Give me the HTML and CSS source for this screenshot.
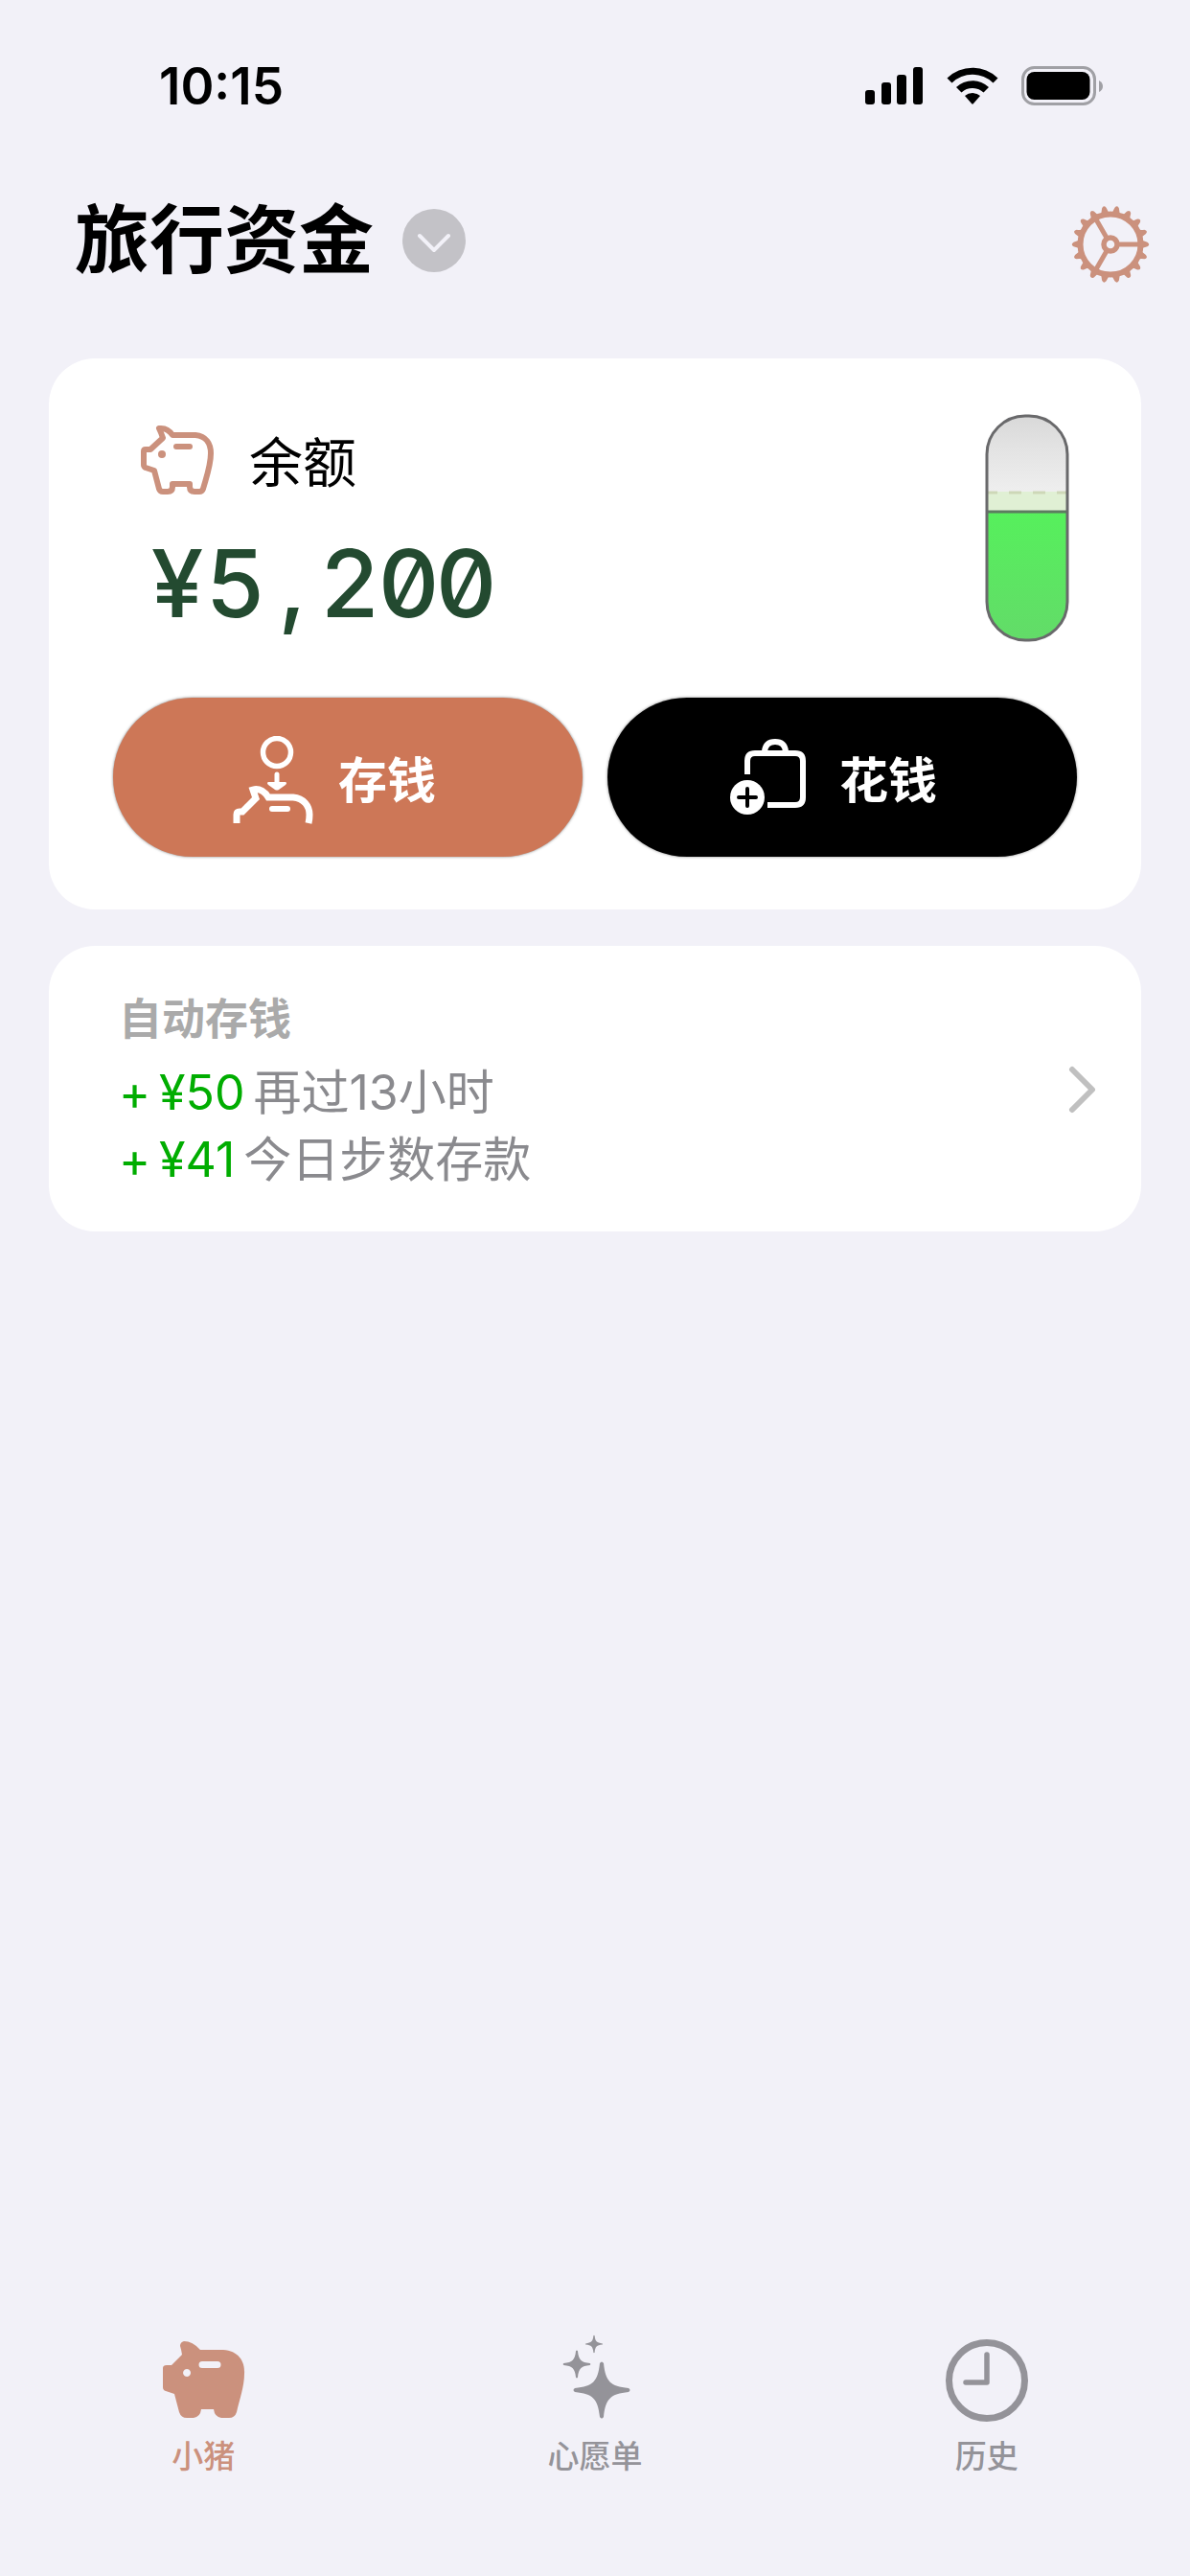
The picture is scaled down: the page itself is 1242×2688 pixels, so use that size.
FILE: index.html
```html
<!DOCTYPE html>
<html lang="zh-CN">
<head>
<meta charset="utf-8">
<meta name="viewport" content="width=device-width, initial-scale=1">
<title>旅行资金</title>
<link rel="stylesheet" href="styles.css">
</head>
<body>
<div class="status-bar">
  <time class="clock">10:15</time>
  <div class="status-icons">
    <svg width="62" height="42" viewBox="0 0 62 42" aria-hidden="true">
      <rect x="1" y="25" width="10" height="15" rx="3"/>
      <rect x="18" y="17" width="10" height="23" rx="3"/>
      <rect x="34" y="9" width="10" height="31" rx="3"/>
      <rect x="51" y="1" width="10" height="39" rx="3"/>
    </svg>
    <svg width="54" height="42" viewBox="0 0 54 42" aria-hidden="true">
      <path d="M0.500 12.500 A38 38 0 0 1 53.500 12.500 L48.500 17.500 A31 31 0 0 0 5.500 17.500 Z"/>
      <path d="M10 22 A24.500 24.500 0 0 1 44 22 L38.500 27.500 A17 17 0 0 0 15.500 27.500 Z"/>
      <path d="M19 31 A12.500 12.500 0 0 1 35 31 L27.800 39.300 Q27 40 26.200 39.300 Z"/>
    </svg>
    <svg width="86" height="42" viewBox="0 0 86 42" aria-hidden="true">
      <rect x="1.500" y="1.500" width="75" height="38" rx="12" fill="none" stroke="#a0a0a5" stroke-width="3"/>
      <rect x="5.500" y="6" width="66" height="29" rx="8"/>
      <path d="M81 15 Q85 17 85 21 Q85 25 81 27 Z" fill="#a0a0a5"/>
    </svg>
  </div>
</div>

<header class="header">
  <h1 class="title">旅行资金</h1>
  <button class="icon-button" type="button" aria-label="切换存钱罐">
    <svg width="66" height="66" viewBox="0 0 66 66">
      <circle cx="33" cy="33" r="33" fill="#c3c2c7"/>
      <path d="M18 28 L33 43 L48 28" fill="none" stroke="#f2f1f8" stroke-width="4" stroke-linecap="round" stroke-linejoin="round"/>
    </svg>
  </button>
  <button class="icon-button settings" type="button" aria-label="设置">
    <svg width="82" height="82" viewBox="-41 -41 82 82" fill="none" stroke="#cb917d">
      <defs><path id="tooth" d="M31 -6 Q34 -3 38.500 -2.300 Q42 0 38.500 2.300 Q34 3 31 6 Z" fill="#cb917d" stroke="none"/></defs>
      <circle r="31.500" stroke-width="6"/>
      <circle r="7" stroke-width="5.500"/>
      <path d="M9 0H30M-4.500 -7.800L-15 -26M-4.500 7.800L-15 26" stroke-width="5"/>
      <use href="#tooth"/><use href="#tooth" transform="rotate(20)"/><use href="#tooth" transform="rotate(40)"/>
      <use href="#tooth" transform="rotate(60)"/><use href="#tooth" transform="rotate(80)"/><use href="#tooth" transform="rotate(100)"/>
      <use href="#tooth" transform="rotate(120)"/><use href="#tooth" transform="rotate(140)"/><use href="#tooth" transform="rotate(160)"/>
      <use href="#tooth" transform="rotate(180)"/><use href="#tooth" transform="rotate(200)"/><use href="#tooth" transform="rotate(220)"/>
      <use href="#tooth" transform="rotate(240)"/><use href="#tooth" transform="rotate(260)"/><use href="#tooth" transform="rotate(280)"/>
      <use href="#tooth" transform="rotate(300)"/><use href="#tooth" transform="rotate(320)"/><use href="#tooth" transform="rotate(340)"/>
    </svg>
  </button>
</header>

<main class="content">
  <section class="card balance">
    <div class="summary">
      <div>
        <div class="balance-label">
          <svg width="78" height="74" viewBox="0 0 78 74" fill="none" stroke="#cb917d" stroke-width="6" stroke-linejoin="round" aria-hidden="true">
            <path d="M34 11 H58 C69 12 74 20 74 30 C74 43 69 56 66 67 Q65 70 62 70 H57 Q52 70 52 65 V62 H34 V65 Q34 70 29 70 H24 Q21 70 20 67 L15 48 L6 45 Q4 44 4 42 V28 Q4 26 6 26 H11 L24 14 Q22 8 20 4 Q29 3 34 11 Z"/>
            <path d="M38 23 H52" stroke-linecap="round"/>
            <circle cx="23" cy="31" r="4" fill="#cb917d" stroke="none"/>
          </svg>
          <h2 class="label-text">余额</h2>
        </div>
        <p class="amount"><span>¥</span><span>5</span><span>,</span><span>2</span><span>0</span><span>0</span></p>
      </div>
      <svg class="tube" width="88" height="238" viewBox="0 0 88 238" role="img" aria-label="目标进度">
        <defs>
          <linearGradient id="empty" x1="0" y1="0" x2="0" y2="1"><stop offset="0" stop-color="#d8d8d8"/><stop offset="0.150" stop-color="#e3e3e3"/><stop offset="0.350" stop-color="#efefef"/></linearGradient>
          <linearGradient id="fill" x1="0" y1="0" x2="0" y2="1"><stop offset="0" stop-color="#56f05c"/><stop offset="1" stop-color="#63db69"/></linearGradient>
          <clipPath id="shell"><rect x="2" y="2" width="84" height="234" rx="40"/></clipPath>
        </defs>
        <g clip-path="url(#shell)">
          <rect width="88" height="238" fill="url(#empty)"/>
          <rect y="81" width="88" height="22" fill="#e0f0d4"/>
          <path d="M0 82 H88" stroke="#cdd8b7" stroke-width="3" stroke-dasharray="13 12"/>
          <rect y="102" width="88" height="136" fill="url(#fill)"/>
          <path d="M0 102 H88" stroke="#5d7c60" stroke-width="3"/>
        </g>
        <rect x="2" y="2" width="84" height="234" rx="40" fill="none" stroke="#69696b" stroke-width="3"/>
      </svg>
    </div>
    <div class="actions">
      <button class="action save" type="button">
        <svg width="84" height="92" viewBox="0 0 84 92" fill="none" stroke="#fff" stroke-width="7" aria-hidden="true">
          <circle cx="46" cy="17" r="14.500" stroke-width="5.500"/>
          <path d="M46 40 V49" stroke-width="5" stroke-linecap="round"/>
          <path d="M37 48 H55 Q57 49 55 51 L48 56 Q46 57 44 56 L37 51 Q35 49 37 48 Z" fill="#fff" stroke="none"/>
          <path d="M4 91 V82 Q4 79 7 79 H10 L24 65 Q22 59 21 56 C28 54 34 59 37 64 H63 C74 65 80 73 80 82 Q80 87 79 91" stroke-linejoin="miter"/>
          <path d="M41 76 H57" stroke-width="6" stroke-linecap="round"/>
        </svg>
        <span>存钱</span>
      </button>
      <button class="action spend" type="button">
        <svg width="80" height="80" viewBox="0 0 80 80" fill="none" stroke="#fff" stroke-width="6" aria-hidden="true">
          <path d="M18 37 V23 Q18 15 26 15 H68 Q76 15 76 23 V61 Q76 69 68 69 H39"/>
          <path d="M36 15 V13 Q37 3 47 3 Q57 3 58 13 V15"/>
          <circle cx="18" cy="61" r="18" fill="#fff" stroke="none"/>
          <path d="M9 61 H27 M18 52 V70" stroke="#000" stroke-width="4" stroke-linecap="round"/>
        </svg>
        <span>花钱</span>
      </button>
    </div>
  </section>

  <a class="card auto" href="#auto">
    <div>
      <h2 class="auto-title">自动存钱</h2>
      <p class="auto-row"><span class="plus">+</span><span class="plus">¥50</span><span>再过13小时</span></p>
      <p class="auto-row"><span class="plus">+</span><span class="plus">¥41</span><span>今日步数存款</span></p>
    </div>
    <svg width="30" height="52" viewBox="0 0 30 52" aria-hidden="true">
      <path d="M4 5 L25 26 L4 47" fill="none" stroke="#c0c0c0" stroke-width="6" stroke-linecap="round" stroke-linejoin="round"/>
    </svg>
  </a>
</main>

<nav class="tabs">
  <a class="tab active" href="#piggy" aria-current="page">
    <svg width="88" height="90" viewBox="0 0 88 90" fill="currentColor" aria-hidden="true">
      <path fill-rule="evenodd" d="M41 13 H65 C80 14 88 24 87 38 C87 51 82 65 79 78 Q77 84 71 84 H63 Q56 83 55 75 H42 Q41 83 34 84 H27 Q21 84 19 78 L14 59 L5 56 Q2 55 2 52 V32 Q2 29 6 29 H11 L22 18 Q21 12 20 9 Q20 5 24 4 Q33 4 41 13 Z M43 25 a3.500 3.500 0 0 0 0 7 H59 a3.500 3.500 0 0 0 0 -7 Z M27 33 a4 4 0 1 0 0.100 0 Z"/>
    </svg>
    <span>小猪</span>
  </a>
  <a class="tab" href="#wishes">
    <svg class="stars" width="88" height="90" viewBox="0 0 88 90" fill="currentColor" aria-hidden="true">
      <defs><path id="star" d="M-2 -28 Q0 -31 2 -28 C4 -9 9 -4 28 -2 Q31 0 28 2 C9 4 4 9 2 28 Q0 31 -2 28 C-4 9 -9 4 -28 2 Q-31 0 -28 -2 C-9 -4 -4 -9 -2 -28 Z"/></defs>
      <use href="#star" transform="translate(51 55)"/>
      <use href="#star" transform="translate(25 28) scale(0.490)"/>
      <use href="#star" transform="translate(43 7) scale(0.310)"/>
    </svg>
    <span>心愿单</span>
  </a>
  <a class="tab" href="#history">
    <svg width="88" height="90" viewBox="0 0 88 90" fill="none" stroke="currentColor" aria-hidden="true">
      <circle cx="44" cy="45" r="39.500" stroke-width="7"/>
      <path d="M44 18 V47 H22" stroke-width="5.500" stroke-linecap="round" stroke-linejoin="round"/>
    </svg>
    <span>历史</span>
  </a>
</nav>
</body>
</html>
```
FILE: styles.css
```css
* { box-sizing: border-box; }

body {
  margin: 0;
  min-height: 100vh;
  display: flex;
  flex-direction: column;
  background: #f2f1f8;
  color: #000;
  font-family: Inter, "Noto Sans CJK SC", sans-serif;
}

h1, h2, p { margin: 0; }

button {
  border: 0;
  padding: 0;
  background: none;
  font: inherit;
  cursor: pointer;
}

a { color: inherit; text-decoration: none; }

svg { display: block; flex: none; }

.stars { overflow: visible; }

.status-bar {
  display: flex;
  justify-content: space-between;
  align-items: center;
  padding: 60px 90px 0 166px;
}

.clock { font-size: 53px; line-height: 60px; font-weight: 600; }

.status-icons { display: flex; gap: 24px; }

.header {
  display: flex;
  align-items: center;
  height: 134px;
  margin: 64px 42px 0 78px;
}

.title { font-size: 78px; line-height: 100px; font-weight: 700; }

.icon-button { margin-left: 30px; }

.settings { margin-top: 8px; margin-left: auto; }

.content {
  display: flex;
  flex-direction: column;
  gap: 38px;
  padding: 56px 51px 0;
}

.card { border-radius: 48px; background: #fff; }

.balance { padding: 58px 67px 55px; }

.summary { display: flex; justify-content: space-between; padding: 0 8px 0 28px; }

.balance-label { display: flex; align-items: flex-start; gap: 36px; padding-top: 11px; }

.label-text { font-size: 56px; line-height: 80px; font-weight: 400; }

.amount {
  display: grid;
  grid-template-columns: repeat(6, 60px);
  margin-top: 26px;
  padding-left: 9px;
  color: #234a30;
  font-size: 98px;
  line-height: 120px;
  font-weight: 500;
  text-align: center;
  font-feature-settings: "zero";
}

.actions { display: grid; grid-template-columns: 1fr 1fr; gap: 26px; margin-top: 58px; }

.action {
  display: flex;
  align-items: center;
  justify-content: center;
  gap: 26px;
  height: 166px;
  border-radius: 83px;
  color: #fff;
  font-size: 51px;
  font-weight: 700;
  box-shadow: 0 0 3px #00000080;
}

.save { padding-right: 28px; background: #cd7757; }

.save svg { margin-top: 6px; }

.spend { gap: 34px; padding-right: 18px; background: #000; }

.auto {
  display: flex;
  align-items: center;
  justify-content: space-between;
  padding: 41px 46px 40px 73px;
}

.auto-title { margin-bottom: 5px; color: #aaa; font-size: 45px; line-height: 72px; font-weight: 700; }

.auto-row { display: flex; gap: 9px; color: #8a8a8e; font-size: 50px; line-height: 70px; }

.plus { color: #00ad00; }

.tabs {
  display: grid;
  grid-template-columns: repeat(3, 1fr);
  margin-top: auto;
  padding: 0 8px 101px;
}

.tab {
  display: flex;
  flex-direction: column;
  align-items: center;
  gap: 10px;
  color: #949399;
  font-size: 33px;
  line-height: 48px;
  font-weight: 500;
}

.active { color: #cb917d; }
```
